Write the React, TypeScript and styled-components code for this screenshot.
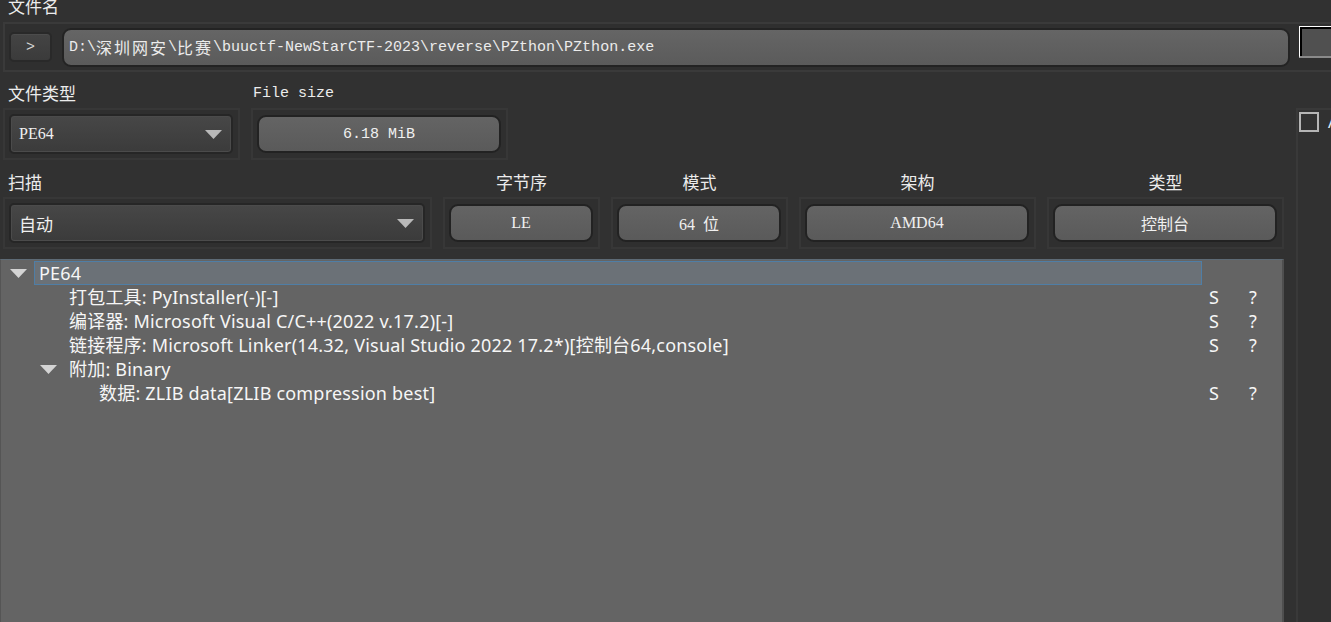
import React from "react";
import styled, { createGlobalStyle } from "styled-components";

const Global = createGlobalStyle`
  html, body { margin: 0; padding: 0; background: #313131; overflow: hidden; }
  body { font-family: "Noto Sans", "Noto Sans CJK SC", sans-serif; color: #eeeeee; }
  * { box-sizing: border-box; }
`;

const SANS = `"Noto Sans", "Noto Sans CJK SC", sans-serif`;
const MONO = `"Liberation Mono", "Noto Sans CJK SC", monospace`;
const SERIF = `"Liberation Serif", "Noto Sans CJK SC", serif`;

const Page = styled.div`
  width: 1331px;
  height: 622px;
  overflow: hidden;
  background: #313131;
  display: flex;
  flex-direction: column;
`;

const TopLabel = styled.div`
  height: 22px;
  margin-top: -4px;
  padding-left: 8px;
  font-family: ${SANS};
  font-size: 17px;
  line-height: 22px;
  color: #ececec;
`;

const PathFrame = styled.div`
  margin-top: 4px;
  margin-left: 3px;
  width: 1340px;
  height: 50px;
  border: 2px solid #3a3a3a;
  border-right: none;
  background: #2f2f2f;
  display: flex;
  align-items: center;
  padding-left: 4px;
  gap: 10px;
`;

const ArrowButton = styled.div`
  width: 43px;
  height: 30px;
  border: 2px solid #292929;
  border-radius: 5px;
  background: linear-gradient(#444444, #3b3b3b);
  box-shadow: inset 0 1px 0 #4c4c4c;
  display: flex;
  align-items: center;
  justify-content: center;
  font-family: ${MONO};
  font-size: 15px;
  color: #d8d8d8;
`;

const PathField = styled.div`
  width: 1228px;
  height: 39px;
  border: 2px solid #232323;
  border-radius: 9px;
  background: linear-gradient(#656565, #5b5b5b);
  display: flex;
  align-items: center;
  padding-left: 5px;
  font-family: ${MONO};
  font-size: 15px;
  color: #ececec;
  white-space: pre;
`;

const Wide = styled.span`
  font-size: 16px;
  letter-spacing: 2px;
`;

const EdgeButton = styled.div`
  margin-left: -1px;
  align-self: flex-start;
  margin-top: 2px;
  width: 40px;
  height: 32px;
  border-top: 1px solid #ffffff;
  border-left: 1px solid #ffffff;
  border-bottom: 2px solid #8a8a8a;
  background: #505050;
  box-shadow: inset 2px 2px 0 #000000;
`;

const Body = styled.div`
  margin-top: 8px;
  display: flex;
  flex: 1;
  min-height: 0;
`;

const Main = styled.div`
  width: 1284px;
  flex-shrink: 0;
  display: flex;
  flex-direction: column;
`;

const Row = styled.div`
  display: flex;
  gap: 11px;
  padding-left: 3px;
  margin-bottom: 9px;
`;

const Field = styled.div<{ $w: number }>`
  width: ${(p) => p.$w}px;
  display: flex;
  flex-direction: column;
`;

const Label = styled.div<{ $center?: boolean; $mono?: boolean }>`
  height: 28px;
  line-height: 28px;
  padding-left: ${(p) => (p.$center ? 0 : p.$mono ? 2 : 5)}px;
  text-align: ${(p) => (p.$center ? "center" : "left")};
  font-family: ${(p) => (p.$mono ? MONO : SANS)};
  font-size: ${(p) => (p.$mono ? 15 : 17)}px;
  color: #ececec;
`;

const Frame = styled.div`
  height: 52px;
  border: 2px solid #373737;
  background: #2f2f2f;
  padding: 4px 5px 4px 4px;
  display: flex;
  align-items: center;
`;

const Combo = styled.div<{ $serif?: boolean }>`
  flex: 1;
  height: 40px;
  border: 2px solid #262626;
  border-radius: 5px;
  background: linear-gradient(#474747, #3b3b3b);
  box-shadow: inset 0 0 0 1px #4b4b4b;
  display: flex;
  align-items: center;
  justify-content: space-between;
  padding: 0 9px 0 8px;
  font-family: ${(p) => (p.$serif ? SERIF : SANS)};
  font-size: ${(p) => (p.$serif ? 16 : 17)}px;
  color: #f0f0f0;
`;

const ValueButton = styled.div<{ $serif?: boolean }>`
  flex: 1;
  height: 38px;
  border: 2px solid #222222;
  border-radius: 9px;
  background: linear-gradient(#646464, #5a5a5a);
  display: flex;
  align-items: center;
  justify-content: center;
  font-family: ${(p) => (p.$serif ? SERIF : MONO)};
  font-size: ${(p) => (p.$serif ? 16 : 15)}px;
  color: #f0f0f0;
  white-space: pre;
`;

const Tree = styled.div`
  margin-top: 1px;
  padding-top: 1px;
  flex: 1;
  background: #646464;
  border-top: 1px solid #5d6a75;
  border-left: 1px solid #555555;
  border-right: 2px solid #4f4f4f;
  font-family: ${SANS};
  font-size: 18px;
  letter-spacing: 0.2px;
  color: #f6f6f6;
`;

const TreeRow = styled.div`
  height: 24px;
  display: grid;
  grid-template-columns: 1201px 40px 1fr;
  align-items: stretch;
`;

const TreeMain = styled.div<{ $level: number }>`
  display: flex;
  align-items: stretch;
  padding-left: ${(p) => 9 + p.$level * 30}px;
`;

const Expander = styled.div`
  width: 24px;
  flex-shrink: 0;
  display: flex;
  align-items: center;
`;

const ItemLabel = styled.div<{ $selected?: boolean }>`
  flex: ${(p) => (p.$selected ? 1 : "0 0 auto")};
  padding: 0 4px;
  border: 1px solid ${(p) => (p.$selected ? "#4f7ea6" : "transparent")};
  background: ${(p) => (p.$selected ? "#6b7177" : "transparent")};
  display: flex;
  align-items: center;
  white-space: nowrap;
  line-height: 22px;
`;

const Cell = styled.div`
  padding-left: 7px;
  display: flex;
  align-items: center;
`;

const Side = styled.div`
  margin-top: 28px;
  margin-left: 12px;
  flex: 1;
  border-top: 2px solid #393939;
  border-left: 2px solid #393939;
  display: flex;
  align-items: flex-start;
  padding: 2px 0 0 1px;
  gap: 9px;
  overflow: hidden;
`;

const CheckBox = styled.div`
  width: 20px;
  height: 20px;
  flex-shrink: 0;
  border: 2px solid #b5b5b5;
`;

const SideText = styled.div`
  font-family: ${SANS};
  font-size: 17px;
  line-height: 20px;
  color: #dfe8f5;
  white-space: nowrap;
`;

const Triangle = ({ w, h, color }: { w: number; h: number; color: string }) => (
  <svg width={w} height={h} viewBox={`0 0 ${w} ${h}`}>
    <polygon points={`0,0 ${w},0 ${w / 2},${h}`} fill={color} />
  </svg>
);

type Item = { level: number; text: string; expand?: boolean; selected?: boolean; flags?: boolean };

const items: Item[] = [
  { level: 0, text: "PE64", expand: true, selected: true },
  { level: 1, text: "打包工具: PyInstaller(-)[-]", flags: true },
  { level: 1, text: "编译器: Microsoft Visual C/C++(2022 v.17.2)[-]", flags: true },
  { level: 1, text: "链接程序: Microsoft Linker(14.32, Visual Studio 2022 17.2*)[控制台64,console]", flags: true },
  { level: 1, text: "附加: Binary", expand: true },
  { level: 2, text: "数据: ZLIB data[ZLIB compression best]", flags: true },
];

export default function App() {
  return (
    <Page>
      <Global />
      <TopLabel>文件名</TopLabel>
      <PathFrame>
        <ArrowButton>&gt;</ArrowButton>
        <PathField>
          D:\<Wide>深圳网安</Wide>\<Wide>比赛</Wide>\buuctf-NewStarCTF-2023\reverse\PZthon\PZthon.exe
        </PathField>
        <EdgeButton />
      </PathFrame>
      <Body>
        <Main>
          <Row>
            <Field $w={237}>
              <Label>文件类型</Label>
              <Frame>
                <Combo $serif>
                  <span>PE64</span>
                  <Triangle w={17} h={9} color="#b9b9b9" />
                </Combo>
              </Frame>
            </Field>
            <Field $w={257}>
              <Label $mono>File size</Label>
              <Frame>
                <ValueButton>6.18 MiB</ValueButton>
              </Frame>
            </Field>
          </Row>
          <Row>
            <Field $w={429}>
              <Label>扫描</Label>
              <Frame>
                <Combo>
                  <span>自动</span>
                  <Triangle w={17} h={9} color="#b9b9b9" />
                </Combo>
              </Frame>
            </Field>
            <Field $w={157}>
              <Label $center>字节序</Label>
              <Frame>
                <ValueButton $serif>LE</ValueButton>
              </Frame>
            </Field>
            <Field $w={177}>
              <Label $center>模式</Label>
              <Frame>
                <ValueButton $serif>64  位</ValueButton>
              </Frame>
            </Field>
            <Field $w={237}>
              <Label $center>架构</Label>
              <Frame>
                <ValueButton $serif>AMD64</ValueButton>
              </Frame>
            </Field>
            <Field $w={237}>
              <Label $center>类型</Label>
              <Frame>
                <ValueButton $serif>控制台</ValueButton>
              </Frame>
            </Field>
          </Row>
          <Tree>
            {items.map((it, i) => (
              <TreeRow key={i}>
                <TreeMain $level={it.level}>
                  <Expander>{it.expand && <Triangle w={17} h={9} color="#d4d4d4" />}</Expander>
                  <ItemLabel $selected={it.selected}>{it.text}</ItemLabel>
                </TreeMain>
                <Cell>{it.flags ? "S" : ""}</Cell>
                <Cell>{it.flags ? "?" : ""}</Cell>
              </TreeRow>
            ))}
          </Tree>
        </Main>
        <Side>
          <CheckBox />
          <SideText>Advanced</SideText>
        </Side>
      </Body>
    </Page>
  );
}
